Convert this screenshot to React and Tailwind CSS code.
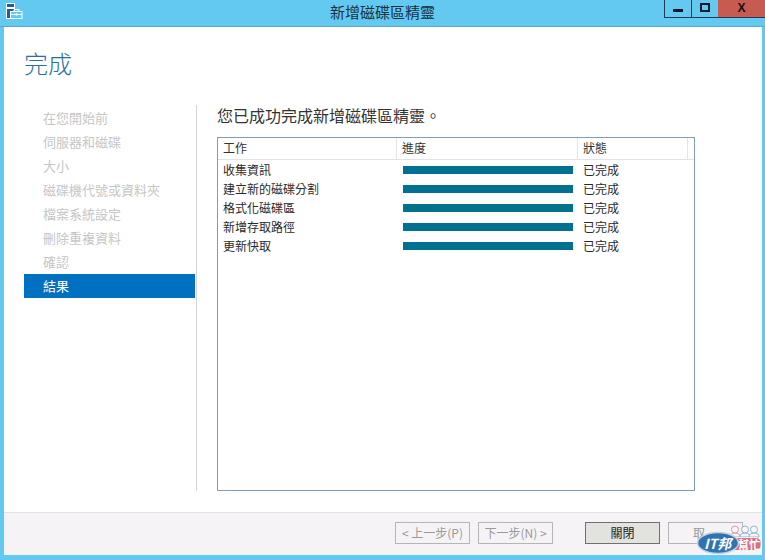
import React from "react";

const cjk = { fontFamily: '"Noto Sans CJK TC", "Liberation Sans", sans-serif' };

const steps = ["在您開始前", "伺服器和磁碟", "大小", "磁碟機代號或資料夾", "檔案系統設定", "刪除重複資料", "確認"];
const tasks = ["收集資訊", "建立新的磁碟分割", "格式化磁碟區", "新增存取路徑", "更新快取"];

const AppIcon = () => (
  <svg width="17" height="17" viewBox="0 0 17 17" className="ml-[6px] mt-[3px]">
    <rect x="0.5" y="0.5" width="8" height="4" fill="#1c5f9c" stroke="#fff" />
    <rect x="0.5" y="5.5" width="8" height="10" fill="#1c5f9c" stroke="#fff" />
    <rect x="4.5" y="8.5" width="11.5" height="7" fill="#64c9f0" stroke="#fff" />
    <path d="M8 8.5V6.5h5v2M5 11.5h11" fill="none" stroke="#fff" />
    <rect x="9.5" y="10.5" width="2" height="2" fill="#fff" />
  </svg>
);

const Person = ({ x, color }) => (
  <g fill="#f4f6f8" stroke={color} strokeWidth="1">
    <path d={`M${x - 5} 13c0-3 2-4 5-4s5 1 5 4z`} />
    <circle cx={x} cy="5.5" r="3.5" />
  </g>
);

const Watermark = () => (
  <div className="absolute left-[697px] top-[524px] w-[68px] h-[32px]">
    <svg width="68" height="32" viewBox="0 0 68 32" className="absolute inset-0">
      <Person x={38} color="#d99aa0" />
      <Person x={48} color="#8fb4d0" />
      <Person x={57} color="#8fb4d0" />
      <rect x="34" y="13.5" width="30" height="13" rx="5" fill="#d9707c" stroke="#f2f2f2" />
      <ellipse cx="21" cy="19" rx="20.5" ry="10.5" fill="#2f74b0" stroke="#c4d2df" strokeWidth="1.5" />
    </svg>
    <span className="absolute left-[7px] top-[8px] text-[14px] leading-[22px] font-bold italic text-white" style={cjk}>
      IT邦
    </span>
    <span className="absolute left-[41px] top-[14px] text-[11px] leading-[12px] font-bold text-white" style={cjk}>
      幫忙
    </span>
  </div>
);

export default function App() {
  return (
    <div className="relative w-[765px] h-[560px] overflow-hidden flex flex-col bg-[#64c9f0] text-[#2a2a2a] text-[12px]" style={cjk}>
      {/* title bar */}
      <div className="relative h-[27px] shrink-0 flex border-b border-[#58a9cb]">
        <AppIcon />
        <div className="absolute inset-x-0 top-[1px] text-center text-[15px] leading-[22px] text-[#16303f]">新增磁碟區精靈</div>
        <div className="ml-auto flex h-[18px] border-l border-b border-[#1d3a55] relative">
          <div className="w-[27px] border-r border-[#1d3a55] flex items-end justify-center pb-[5px]">
            <div className="w-[10px] h-[3px] bg-[#0b1a2e]" />
          </div>
          <div className="w-[26px] flex items-center justify-center pb-[2px]">
            <div className="w-[10px] h-[9px] border-2 border-[#0b1a2e]" />
          </div>
          <div className="w-[47px] bg-[#c75b52] flex items-center justify-center text-[12px] leading-none font-bold text-[#111] pb-[2px]" style={{ fontFamily: '"Liberation Sans", sans-serif' }}>
            X
          </div>
        </div>
      </div>

      {/* window body */}
      <div className="flex-1 ml-[4px] mr-[3px] mb-[5px] bg-white flex flex-col min-h-0">
        <div className="flex-1 flex flex-col min-h-0">
          <h1 className="ml-[20px] mt-[18px] text-[24px] leading-[36px] font-light text-[#2a7196]">完成</h1>
          <div className="flex-1 flex mt-[24px] mb-[21px] min-h-0">
            <nav className="ml-[20px] w-[171px] shrink-0 flex flex-col">
              <div className="h-px" />
              {steps.map((s) => (
                <div key={s} className="h-[24px] pl-[19px] text-[13px] leading-[24px] text-[#c6c6c6]">{s}</div>
              ))}
              <div className="h-[24px] pl-[19px] text-[13px] leading-[24px] bg-[#0070c0] text-white">結果</div>
            </nav>
            <div className="ml-px w-px bg-[#d4d4d4]" />
            <div className="ml-[20px] w-[478px] flex flex-col">
              <div className="text-[16px] leading-[20px] text-[#333]">您已成功完成新增磁碟區精靈。</div>
              <div className="mt-[12px] flex-1 border border-[#7f9db9]">
                <div className="flex h-[22px] border-b border-[#e0e3e8] leading-[20px] text-[#333]">
                  <div className="w-[179px] pl-[5px] border-r border-[#e3e5e8]">工作</div>
                  <div className="w-[181px] pl-[5px] border-r border-[#e3e5e8]">進度</div>
                  <div className="w-[110px] pl-[5px] border-r border-[#e3e5e8]">狀態</div>
                </div>
                {tasks.map((t) => (
                  <div key={t} className="flex h-[19px] items-center leading-[19px]">
                    <div className="w-[179px] pl-[5px]">{t}</div>
                    <div className="w-[181px] pl-[6px]">
                      <div className="w-[170px] h-[8px] bg-[#00718f]" />
                    </div>
                    <div className="pl-[5px]">已完成</div>
                  </div>
                ))}
              </div>
            </div>
          </div>
        </div>

        {/* footer */}
        <div className="h-[43px] shrink-0 bg-[#f5f3f5] border-t border-[#e2e2e4] flex items-start pt-[9px]">
          <button className="ml-[391px] w-[75px] h-[22px] border border-[#b5b5b5] bg-[#f5f3f5] text-[#9a9a9a] leading-[20px]">&lt; 上一步(P)</button>
          <button className="ml-[8px] w-[75px] h-[22px] border border-[#b5b5b5] bg-[#f5f3f5] text-[#9a9a9a] leading-[20px]">下一步(N) &gt;</button>
          <button className="ml-[32px] w-[75px] h-[22px] border border-[#707070] bg-[#e2e2df] text-[#222] leading-[20px]">關閉</button>
          <button className="ml-[8px] w-[75px] h-[22px] border border-[#b5b5b5] bg-[#f5f3f5] text-[#9a9a9a] leading-[20px] text-left pl-[24px]">取</button>
        </div>
      </div>

      <Watermark />
    </div>
  );
}
